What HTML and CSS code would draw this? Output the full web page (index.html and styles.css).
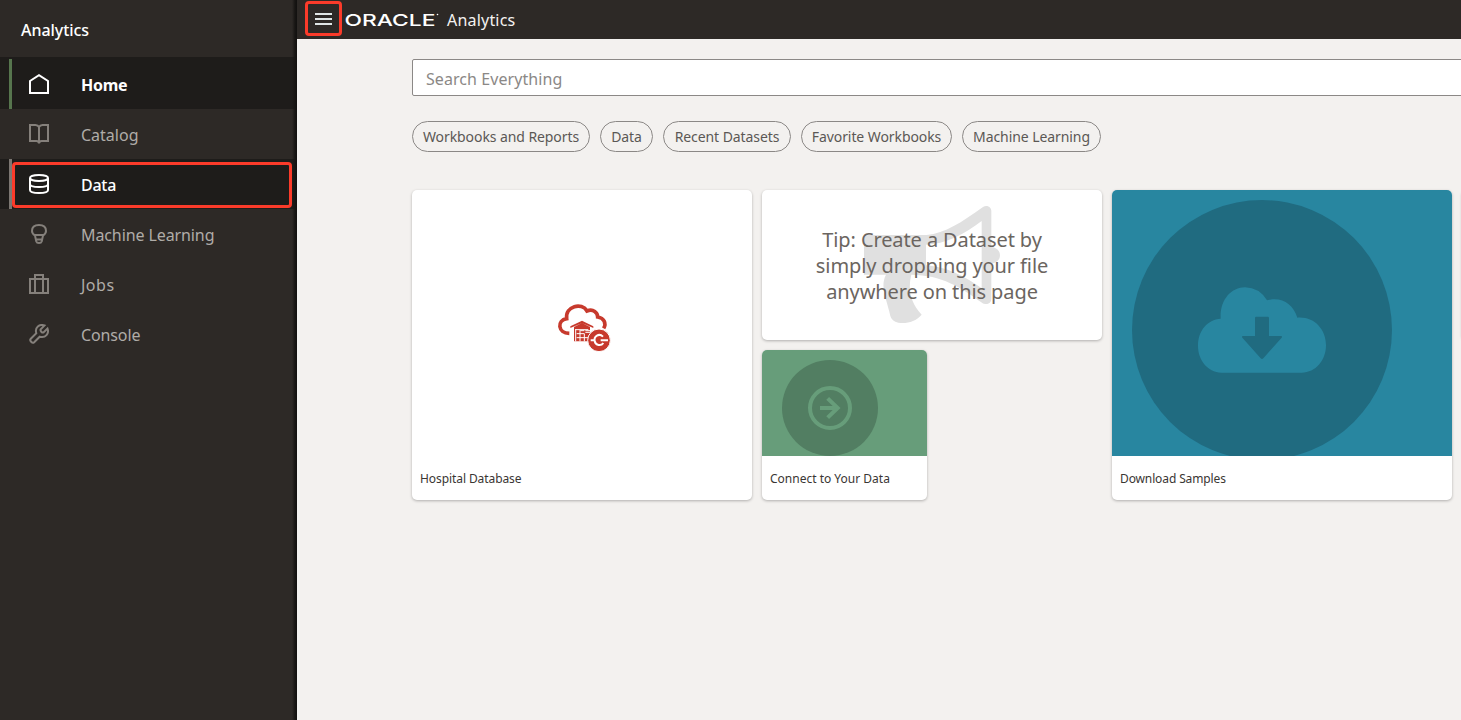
FILE: index.html
```html
<!DOCTYPE html>
<html lang="en">
<head>
<meta charset="utf-8">
<title>Oracle Analytics</title>
<link rel="stylesheet" href="styles.css">
</head>
<body>
<div class="app">
  <nav class="sidebar">
    <div class="sidebar-title"><span class="t-title">Analytics</span></div>
    <a class="nav-item home">
      <svg class="nav-icon" viewBox="0 0 20 20"><path d="M1 7 10 1.2 19 7V19H1Z"/></svg>
      <span class="t-home">Home</span>
    </a>
    <a class="nav-item">
      <svg class="nav-icon" viewBox="0 0 20 20"><path d="M10 3.200Q9 1 6.500 1H1V17H7.500Q10 17 10 19.500Q10 17 12.500 17H19V1H13.500Q11 1 10 3.200V18"/></svg>
      <span class="t-catalog">Catalog</span>
    </a>
    <a class="nav-item data">
      <svg class="nav-icon" viewBox="0 0 20 20"><ellipse cx="10" cy="4" rx="9" ry="3"/><path d="M1 4V16C1 20 19 20 19 16V4M1 10C1 14 19 14 19 10"/></svg>
      <span class="t-data">Data</span>
    </a>
    <a class="nav-item">
      <svg class="nav-icon" viewBox="0 0 20 20"><path d="M6 11.500Q3 9.500 3 7C3 3 6 1 10 1S17 3 17 7Q17 9.500 14 11.500L12.700 17.500Q12.200 19 10 19T7.300 17.500ZM5.500 11H14.500M6.800 15.500H13.200"/></svg>
      <span class="t-ml">Machine Learning</span>
    </a>
    <a class="nav-item">
      <svg class="nav-icon" viewBox="0 0 20 20"><path d="M1 5H19V19H1ZM6 19V1H14V19"/></svg>
      <span class="t-jobs">Jobs</span>
    </a>
    <a class="nav-item">
      <svg class="nav-icon" viewBox="0 0 20 20"><path d="M15.500 1.500C10.500-.4 5.500 3.500 7.300 9.300L1.800 14.800C.1 16.600 3.300 19.900 5.200 18.200L10.700 12.700C16.500 14.500 20.400 9.500 18.500 4.500L14.700 8.300Q13.500 9 12.300 7.700T11.700 5.300Z"/></svg>
      <span class="t-console">Console</span>
    </a>
    <div class="highlight data-highlight"></div>
  </nav>

  <main class="main">
    <header class="topbar">
      <button class="menu-button" aria-label="Navigator">
        <svg viewBox="0 0 17 12"><path d="M0 1H17M0 6H17M0 11H17"/></svg>
      </button>
      <svg class="logo" viewBox="0 0 96 20"><text x="-.5" y="15.700" textLength="91" lengthAdjust="spacingAndGlyphs">ORACLE</text><circle cx="92.500" cy="4.500" r=".8"/></svg>
      <span class="product">Analytics</span>
    </header>
    <section class="content">
      <div class="search"><span>Search Everything</span></div>
      <div class="chips">
        <span class="chip chip-workbooks"><b>Workbooks and Reports</b></span>
        <span class="chip chip-data"><b>Data</b></span>
        <span class="chip chip-recent"><b>Recent Datasets</b></span>
        <span class="chip chip-favorite"><b>Favorite Workbooks</b></span>
        <span class="chip chip-ml"><b>Machine Learning</b></span>
      </div>
      <div class="tiles">
        <article class="tile tall">
          <div class="art art-white">
            <svg class="hospital" viewBox="0 0 270 225">
              <path class="cloud" d="M88 130C53 129 50 92 80 86C75 48 126 36 141 63C160 55 173 69 173 81C192 84 200 99 191 115"/>
              <path d="M91 109 126 92 160 109V114L126 99 91 114ZM102 111 126 99 150 111V154H102Z"/>
              <path class="gap" d="M107 119H145M107 117V154M120 120V154M133 131V154M110 131H133M110 143H146"/>
              <path class="gap" d="M136 122H150M136 127H150M121 122H133"/>
              <circle class="badge" cx="177" cy="151" r="34"/>
              <path class="c-mark" d="M189 140C177 128 161 139 164 153C167 168 184 168 190 159M152 151H164M182 151H204"/>
            </svg>
          </div>
          <div class="caption"><span class="t-hospital">Hospital Database</span></div>
        </article>
        <div class="stack">
          <article class="tile tip">
            <svg class="megaphone" viewBox="21 15 1020 450"><path fill-rule="evenodd" d="M343 150H515C570 145 620 112 684 66C696 58 709 66 709 78V186C726 188 735 198 735 211S726 234 709 236V342C709 356 693 362 681 353C618 307 560 270 469 269C458 310 466 354 500 389C482 410 457 416 430 413Q410 409 406 393C395 343 374 305 393 269H327V166Q327 150 343 150ZM513 179V241C575 245 632 276 680 310V108C628 148 570 178 513 179Z"/></svg>
            <p><span class="tip1">Tip: Create a Dataset by</span><span class="tip2">simply dropping your file</span><span class="tip3">anywhere on this page</span></p>
          </article>
          <article class="tile connect">
            <div class="art art-green">
              <svg viewBox="21 15 495 318"><circle class="disc-green" cx="225" cy="189" r="144"/><circle class="ring" cx="225" cy="189" r="60"/><path class="arrow" d="M195 189H250M218 160 248 189 218 218"/></svg>
            </div>
            <div class="caption"><span class="t-connect">Connect to Your Data</span></div>
          </article>
        </div>
        <article class="tile tall">
          <div class="art art-blue">
            <svg viewBox="21 15 1020 798"><circle class="disc-blue" cx="471" cy="435" r="390"/><path class="cloud-fill" d="M350 563C306 561 279 524 279 482C279 437 307 404 347 401C344 346 378 307 420 307Q463 308 486 346C529 334 564 356 577 398C628 394 663 433 663 481C663 526 632 563 590 563Z"/><path class="down" d="M454 395H488Q492 395 492 399V453H528Q533 454 530 458L475 520Q471 524 467 520L412 458Q409 454 414 453H450V399Q450 395 454 395Z"/></svg>
          </div>
          <div class="caption"><span class="t-download">Download Samples</span></div>
        </article>
        <article class="tile tip"></article>
      </div>
    </section>
  </main>
</div>
</body>
</html>
```
FILE: styles.css
```css
* { box-sizing: border-box; }
body { margin: 0; font-family: "Noto Sans", "Open Sans", sans-serif; }
svg { display: block; }
.app { display: flex; width: 100vw; height: 720px; overflow: hidden; background: #f3f1ef; }

/* Navigation drawer */
.sidebar { position: relative; flex: 0 0 297px; background: #2d2926; font-size: 16px; color: #b0aca8; white-space: nowrap; }
.sidebar::after { content: ""; position: absolute; inset: 0 0 0 auto; width: 5px; background: linear-gradient(90deg, rgba(20,18,16,0), #171513 60%, #11100f); }
.sidebar-title { height: 59px; padding-left: 21px; line-height: 61px; color: #fff; font-weight: 500; background: linear-gradient(#2d2926 57px, #1e1c1a 57px); }
.nav-item { display: flex; align-items: center; height: 50px; padding-left: 29px; gap: 32px; }
.nav-item span { line-height: 22px; padding-top: 2px; }
.nav-icon { width: 20px; height: 20px; fill: none; stroke: #85807b; stroke-width: 2; }
.home, .data { background: #1e1c1a; color: #fff; border-left: 3px solid #56754d; padding-left: 17px; margin-left: 9px; box-shadow: -9px 0 #1e1c1a; }
.home { font-weight: 700; }
.data { font-weight: 500; border-left-color: #7c7772; }
.home .nav-icon, .data .nav-icon { stroke: #fff; }
.t-title { letter-spacing: -.06px; }
.t-home, .t-data { letter-spacing: -.25px; }
.t-ml { letter-spacing: -.1px; }
.t-jobs { letter-spacing: .5px; }
.t-console { letter-spacing: -.12px; }
.highlight { position: absolute; border: 3px solid #fb3b2a; border-radius: 4px; z-index: 2; }
.data-highlight { left: 12px; top: 162px; width: 280px; height: 46px; }

/* Header */
.main { flex: 1; min-width: 0; overflow: hidden; }
.topbar { display: flex; align-items: flex-start; height: 39px; padding-left: 8px; background: #2d2926; }
.menu-button { display: flex; align-items: center; justify-content: center; width: 37px; height: 35px; margin-top: 1px; padding: 0; background: none; border: 3px solid #fb3b2a; border-radius: 4px; }
.menu-button svg { width: 17px; height: 12px; stroke: #dfe5e5; stroke-width: 2; margin: 1px 1px 0 0; }
.logo { width: 96px; height: 20px; margin: 10px 0 0 3px; fill: #fff; font: 500 16.4px Inter, sans-serif; }
.product { margin: 9px 0 0 6px; font-size: 16px; line-height: 22px; letter-spacing: .2px; color: #f4f2f0; }

/* Home page */
.content { padding: 20px 0 0 115px; }
.search { width: 1100px; height: 37px; padding-left: 13px; border: 1px solid #8b8886; border-radius: 2px; background: #fff; color: #8b8886; font-size: 16px; line-height: 38px; letter-spacing: .07px; }
.chips { display: flex; gap: 10px; margin-top: 25px; }
.chip { display: flex; justify-content: center; height: 31px; border: 1px solid #8b8886; border-radius: 16px; font-size: 14px; line-height: 30px; letter-spacing: -.08px; color: #5b5855; white-space: nowrap; }
.chip b { font-weight: 400; }
.chip-workbooks { width: 178px; }
.chip-data { width: 53px; }
.chip-recent { width: 128px; }
.chip-favorite { width: 151px; }
.chip-ml { width: 139px; }
.tiles { display: flex; gap: 10px; width: 1400px; margin-top: 38px; }
.stack { display: flex; flex-direction: column; gap: 10px; }
.tile { width: 340px; border-radius: 5px; background: #fff; box-shadow: 0 1px 3px rgba(0,0,0,.28); overflow: hidden; }
.tall { height: 310px; }
.tip { position: relative; height: 150px; }
.connect { width: 165px; height: 150px; }
.art { height: 266px; }
.connect .art { height: 106px; }
.art svg { width: 100%; height: 100%; }
.art-white { padding: 100px 0 0 128px; }
.art-white .hospital { width: 90px; height: 75px; fill: #c73a2d; }
.cloud { fill: none; stroke: #c73a2d; stroke-width: 11; }
.gap { fill: none; stroke: #fff; stroke-width: 3; }
.badge { stroke: #fff; stroke-width: 3; }
.c-mark { fill: none; stroke: #fff; stroke-width: 6; }
.art-green { background: #679d7a; }
.disc-green { fill: #527e62; }
.ring { fill: none; stroke: #679d7a; stroke-width: 12; }
.arrow { fill: none; stroke: #679d7a; stroke-width: 12; }
.art-blue { background: #2886a0; }
.disc-blue, .down { fill: #206b80; }
.cloud-fill { fill: #2886a0; }
.caption { height: 44px; padding-left: 8px; font-size: 12px; line-height: 45px; color: #3a3633; white-space: nowrap; }
.t-hospital { letter-spacing: -.08px; }
.t-download { letter-spacing: -.12px; }
.megaphone { position: absolute; inset: 0; width: 340px; height: 150px; fill: #e0e0e0; }
.tip p { position: relative; display: flex; flex-direction: column; align-items: center; margin: 0; padding-top: 37px; font-size: 20px; line-height: 26px; letter-spacing: -.1px; color: #6b6560; white-space: nowrap; }
```
